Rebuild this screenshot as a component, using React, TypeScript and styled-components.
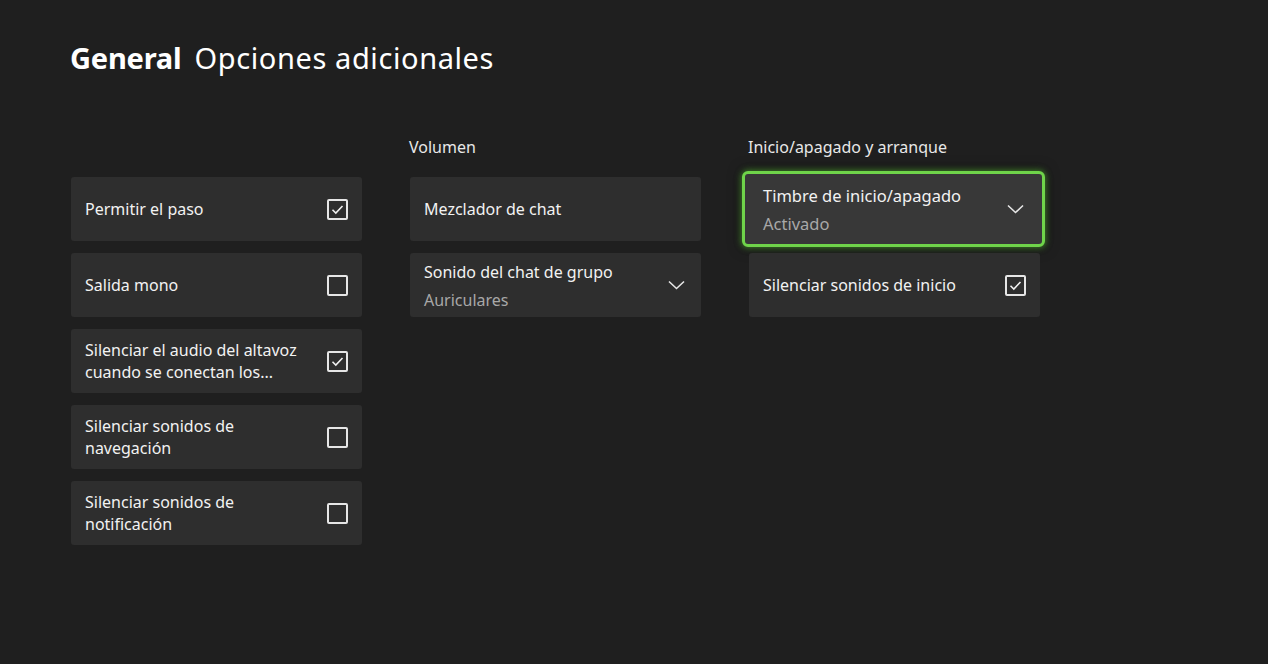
import React from "react";
import styled, { createGlobalStyle } from "styled-components";

const Global = createGlobalStyle`
  html, body { margin: 0; padding: 0; background: #1f1f1f; }
  body { font-family: "Noto Sans", "Open Sans", sans-serif; color: #f2f2f2; }
  * { box-sizing: border-box; }
`;

const Page = styled.div`
  width: 1268px;
  height: 664px;
  background: #1f1f1f;
  padding: 38px 0 0 70px;
  overflow: hidden;
`;

const Title = styled.h1`
  margin: 0;
  font-family: "Noto Sans", sans-serif;
  font-size: 29px;
  font-weight: 400;
  color: #ffffff;
  display: flex;
  gap: 13px;
  line-height: 40px;
`;

const Strong = styled.span`
  font-weight: 700;
  letter-spacing: -0.2px;
`;

const Light = styled.span`
  letter-spacing: 0.6px;
`;

const Columns = styled.div`
  display: grid;
  grid-template-columns: 291px 291px 291px;
  column-gap: 48px;
  margin-top: 57px;
  margin-left: 1px;
`;

const Column = styled.div`
  display: flex;
  flex-direction: column;
`;

const Header = styled.div`
  height: 42px;
  font-size: 16px;
  color: #e8e8e8;
  line-height: 20px;
  padding-top: 2px;
  margin-left: -1px;
`;

const List = styled.div`
  display: flex;
  flex-direction: column;
  gap: 12px;
`;

const Card = styled.div<{ $focused?: boolean }>`
  height: 64px;
  background: #2e2e2e;
  border-radius: 3px;
  display: flex;
  align-items: center;
  justify-content: space-between;
  padding: 0 14px 0 14px;
  ${(p) =>
    p.$focused &&
    `
    height: 76px;
    margin: -6px -5px -6px -7px;
    border: 3px solid #6fd44a;
    border-radius: 6px;
    background: #383838;
    padding: 0 16px 0 18px;
    box-shadow: 0 0 6px 1px rgba(100, 210, 60, 0.55), 0 0 14px rgba(0,0,0,0.6);
  `}
`;

const Texts = styled.div`
  display: flex;
  flex-direction: column;
  gap: 7px;
`;

const Label = styled.div<{ $big?: boolean }>`
  font-size: ${(p) => (p.$big ? "16.5px" : "16px")};
  line-height: 22px;
  color: #f2f2f2;
  max-width: 232px;
`;

const Sub = styled.div<{ $big?: boolean }>`
  font-size: ${(p) => (p.$big ? "16.5px" : "16px")};
  line-height: 20px;
  color: #a8a8a8;
`;

const Box = styled.div`
  width: 21px;
  height: 21px;
  border: 2px solid #e6e6e6;
  border-radius: 2px;
  display: flex;
  align-items: center;
  justify-content: center;
  flex: none;
`;

const Check = ({ on }: { on: boolean }) => (
  <Box>
    {on && (
      <svg width="13" height="11" viewBox="0 0 13 11">
        <path d="M1.5 5.8 L4.8 9 L11.5 2" fill="none" stroke="#f0f0f0" strokeWidth="1.6" />
      </svg>
    )}
  </Box>
);

const Chevron = () => (
  <svg width="17" height="10" viewBox="0 0 17 10" style={{ flex: "none", marginRight: 2 }}>
    <path d="M1 1.5 L8.5 8.5 L16 1.5" fill="none" stroke="#e6e6e6" strokeWidth="1.6" />
  </svg>
);

export default function App() {
  return (
    <Page>
      <Global />
      <Title>
        <Strong>General</Strong>
        <Light>Opciones adicionales</Light>
      </Title>
      <Columns>
        <Column>
          <Header />
          <List>
            <Card>
              <Label>Permitir el paso</Label>
              <Check on />
            </Card>
            <Card>
              <Label>Salida mono</Label>
              <Check on={false} />
            </Card>
            <Card>
              <Label>Silenciar el audio del altavoz cuando se conectan los...</Label>
              <Check on />
            </Card>
            <Card>
              <Label>Silenciar sonidos de navegación</Label>
              <Check on={false} />
            </Card>
            <Card>
              <Label>Silenciar sonidos de notificación</Label>
              <Check on={false} />
            </Card>
          </List>
        </Column>
        <Column>
          <Header>Volumen</Header>
          <List>
            <Card>
              <Label>Mezclador de chat</Label>
            </Card>
            <Card>
              <Texts>
                <Label>Sonido del chat de grupo</Label>
                <Sub>Auriculares</Sub>
              </Texts>
              <Chevron />
            </Card>
          </List>
        </Column>
        <Column>
          <Header>Inicio/apagado y arranque</Header>
          <List>
            <Card $focused>
              <Texts>
                <Label $big>Timbre de inicio/apagado</Label>
                <Sub $big>Activado</Sub>
              </Texts>
              <Chevron />
            </Card>
            <Card>
              <Label>Silenciar sonidos de inicio</Label>
              <Check on />
            </Card>
          </List>
        </Column>
      </Columns>
    </Page>
  );
}
